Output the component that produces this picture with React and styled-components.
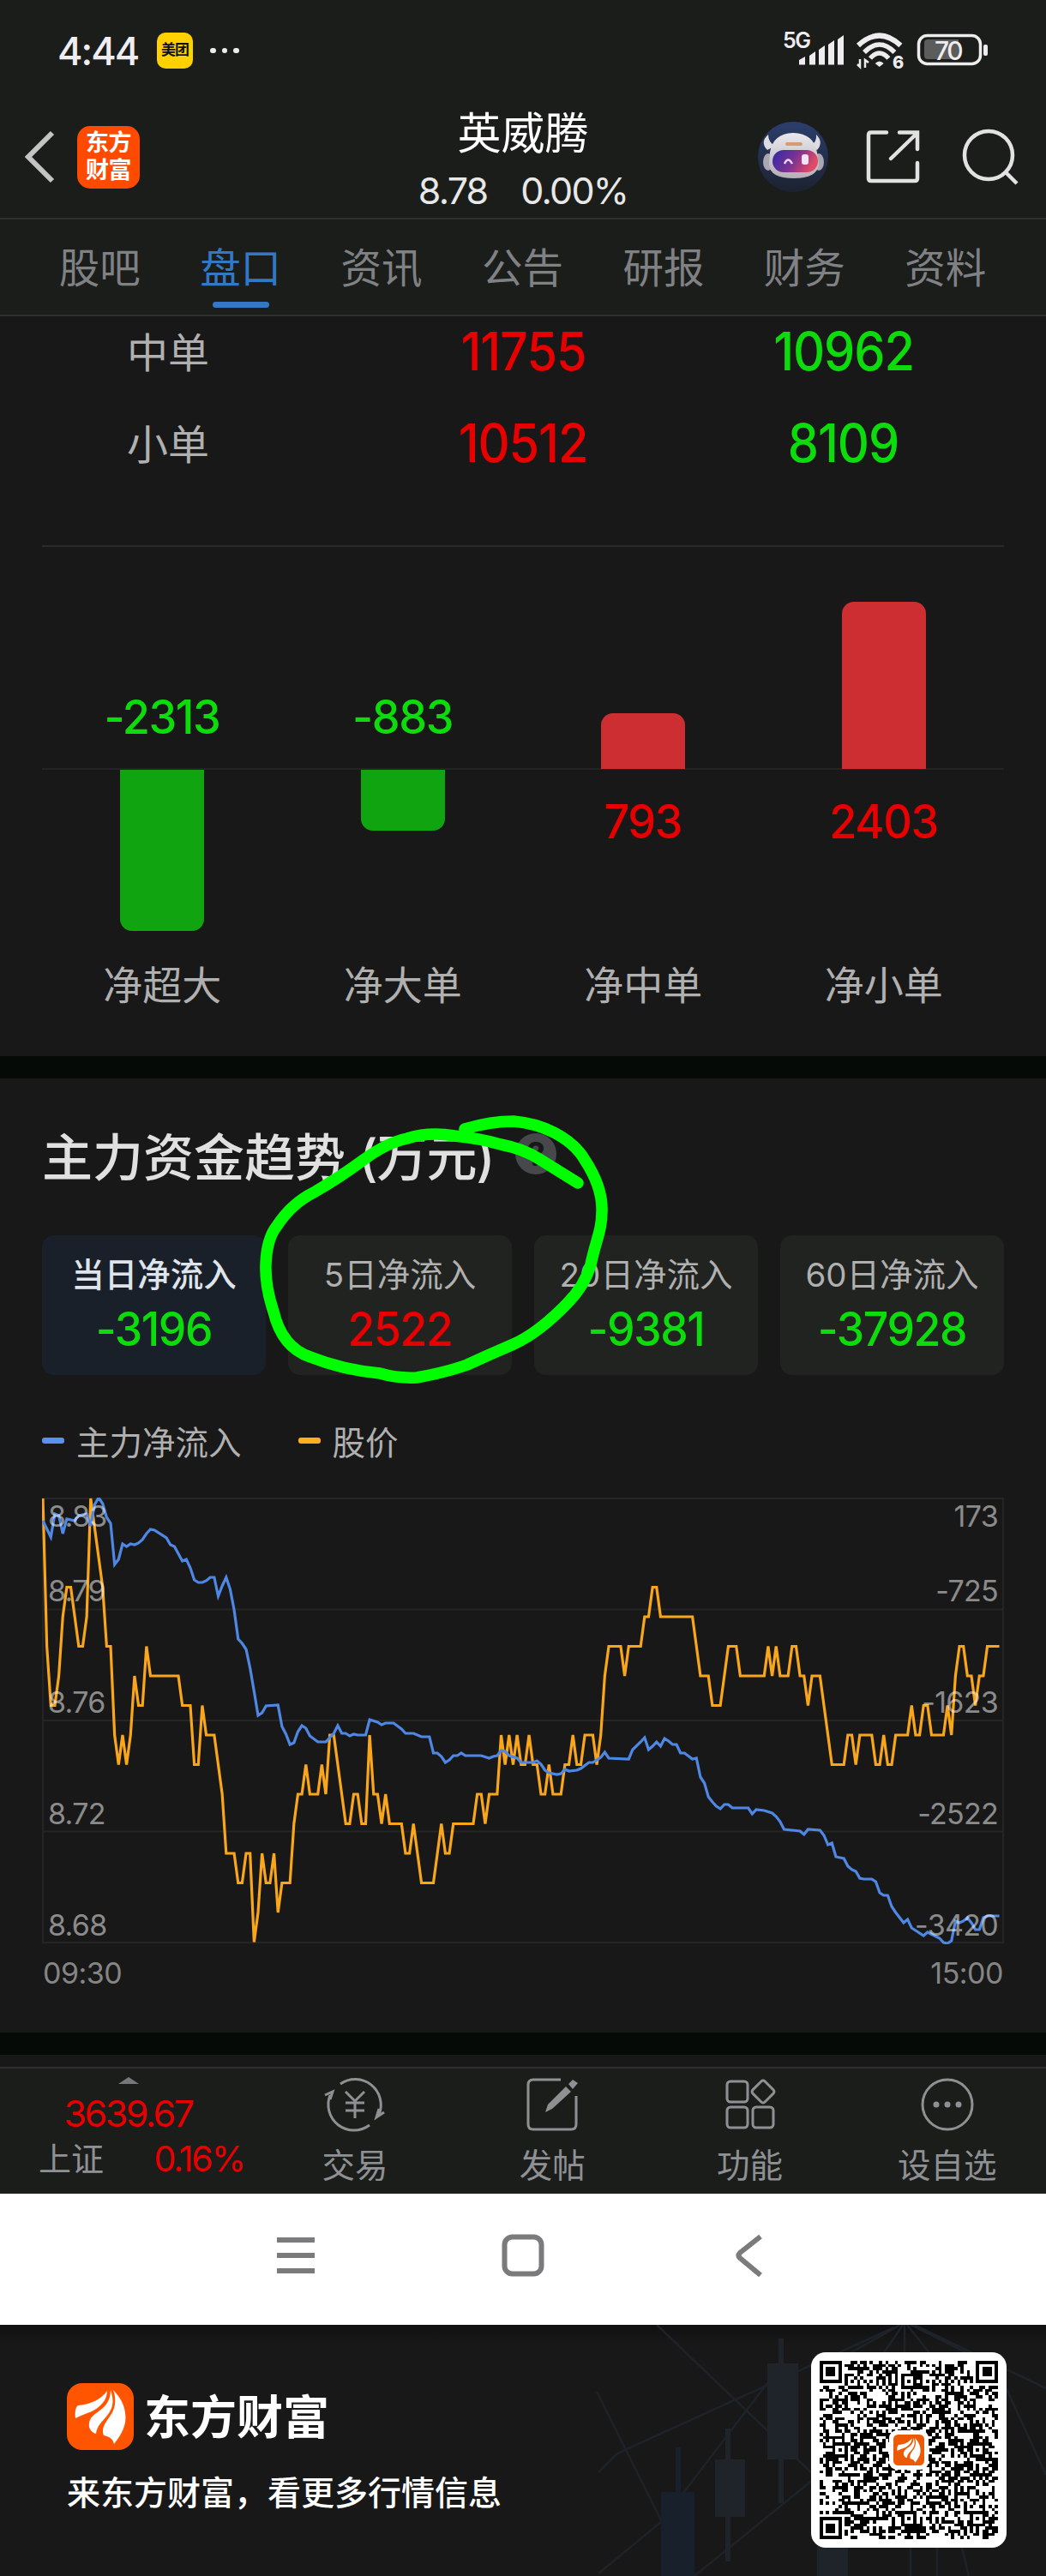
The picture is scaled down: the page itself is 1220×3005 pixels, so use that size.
import React from 'react'
import styled, { createGlobalStyle } from 'styled-components'

const RED = '#e60000'
const GREEN = '#0cdb0c'

const TABS = ['股吧', '盘口', '资讯', '公告', '研报', '财务', '资料']

const ORDERS = [
    { name: '中单', buy: '11755', sell: '10962' },
    { name: '小单', buy: '10512', sell: '8109' },
]

const NET = [
    { name: '净超大', value: -2313, size: 188 },
    { name: '净大单', value: -883, size: 71 },
    { name: '净中单', value: 793, size: 65 },
    { name: '净小单', value: 2403, size: 195 },
]

const PERIODS = [
    { name: '当日净流入', value: -3196, active: true },
    { name: '5日净流入', value: 2522 },
    { name: '20日净流入', value: -9381 },
    { name: '60日净流入', value: -37928 },
]

const PRICE_TICKS = ['8.83', '8.79', '8.76', '8.72', '8.68']
const FLOW_TICKS = ['173', '-725', '-1623', '-2522', '-3420']
const TICK_Y = [22, 109, 239, 369, 499]

// [minute, cents above 8.00], straight between the points
const PRICE = [
    [0, 83], [1, 78], [2, 76], [3, 76], [4, 77], [5, 79], [6, 80], [7, 80], [9, 78], [10, 78], [11, 79], [12, 83],
    [13, 82], [15, 80], [16, 78], [17, 78], [18, 75], [19, 74], [20, 75], [21, 74], [22, 75], [23, 77], [24, 76],
    [25, 76], [26, 78], [27, 77], [34, 77], [35, 76], [37, 76], [38, 74], [39, 74], [40, 76], [41, 75], [43, 75],
    [45, 73], [46, 71], [48, 71], [49, 70], [50, 70], [51, 71], [52, 71], [53, 68], [54, 69], [55, 71], [56, 70],
    [57, 70], [58, 71], [59, 69], [60, 70], [62, 70], [63, 72], [64, 73], [65, 73], [66, 74], [67, 73], [69, 73],
    [70, 74], [71, 73], [72, 75], [73, 75], [76, 72], [77, 72], [78, 73], [79, 73], [80, 72], [81, 72], [82, 75],
    [83, 73], [84, 73], [85, 72], [86, 73], [87, 72], [90, 72], [91, 71], [92, 71], [93, 72], [95, 70], [98, 70],
    [100, 72], [101, 71], [102, 71], [103, 72], [108, 72], [109, 73], [110, 73], [111, 72], [112, 73], [114, 73],
    [115, 75], [116, 74], [117, 75], [118, 74], [119, 75], [120, 74], [121, 74], [122, 75], [123, 74], [124, 74],
    [125, 73], [126, 73], [127, 74], [128, 73], [130, 73], [131, 74], [132, 74], [133, 75], [134, 74], [135, 74],
    [136, 75], [138, 75], [139, 74], [140, 75], [141, 77], [142, 78], [145, 78], [146, 77], [147, 78], [150, 78],
    [151, 79], [152, 79], [153, 80], [154, 80], [155, 79], [163, 79], [165, 77], [167, 77], [168, 76], [170, 76],
    [172, 78], [174, 78], [175, 77], [181, 77], [182, 78], [183, 77], [184, 78], [185, 77], [187, 77], [188, 78],
    [189, 78], [190, 77], [191, 77], [192, 76], [193, 77], [195, 77], [198, 74], [201, 74], [202, 75], [203, 75],
    [204, 74], [205, 75], [208, 75], [209, 74], [210, 74], [211, 75], [212, 74], [213, 74], [214, 75], [217, 75],
    [218, 76], [219, 75], [220, 75], [221, 76], [222, 76], [223, 75], [226, 75], [227, 76], [228, 75], [229, 77],
    [230, 78], [231, 78], [232, 77], [233, 77], [234, 76], [235, 77], [236, 77], [237, 78], [240, 78],
]

// [minute, distance below the top grid line]
const FLOW = [
    [0, 26], [2, 45], [3, 18], [4, 20], [5, 41], [6, 24], [8, 26], [9, 20], [11, 18], [12, 32], [13, 7], [14, -1],
    [15, 6], [16, 22], [17, 29], [18, 77], [19, 71], [20, 53], [21, 56], [22, 53], [23, 54], [24, 52], [25, 48],
    [26, 41], [27, 36], [28, 37], [31, 46], [32, 54], [33, 56], [35, 73], [36, 71], [37, 81], [38, 95], [39, 98],
    [40, 98], [41, 96], [42, 92], [43, 92], [44, 114], [45, 102], [46, 92], [47, 106], [48, 130], [49, 164],
    [50, 169], [51, 176], [52, 198], [53, 225], [54, 253], [55, 250], [56, 242], [59, 241], [60, 266], [61, 275],
    [62, 287], [63, 285], [64, 272], [65, 265], [66, 268], [67, 277], [69, 284], [71, 284], [73, 274], [74, 265],
    [75, 274], [76, 274], [77, 277], [78, 275], [79, 276], [81, 276], [82, 258], [84, 261], [85, 264], [86, 262],
    [88, 262], [90, 269], [91, 274], [93, 274], [95, 278], [97, 278], [98, 297], [99, 297], [100, 301], [101, 308],
    [102, 305], [103, 300], [104, 300], [105, 297], [106, 300], [110, 300], [112, 303], [113, 301], [114, 300],
    [115, 294], [116, 295], [117, 300], [119, 303], [120, 308], [123, 308], [124, 306], [125, 310], [126, 317],
    [127, 320], [129, 322], [130, 321], [131, 316], [132, 318], [134, 317], [135, 315], [137, 308], [138, 308],
    [140, 302], [141, 296], [142, 303], [147, 304], [148, 293], [150, 284], [151, 279], [152, 293], [153, 289],
    [154, 284], [155, 289], [156, 280], [157, 283], [158, 287], [159, 287], [160, 297], [161, 297], [163, 304],
    [164, 303], [165, 325], [166, 332], [167, 348], [168, 354], [169, 359], [170, 362], [171, 357], [172, 357],
    [173, 361], [177, 361], [178, 368], [179, 363], [181, 364], [183, 367], [184, 371], [185, 377], [186, 386],
    [190, 388], [191, 392], [192, 386], [195, 387], [196, 393], [197, 404], [198, 402], [199, 418], [201, 420],
    [202, 429], [203, 433], [204, 435], [205, 443], [206, 444], [208, 444], [209, 447], [210, 460], [211, 463],
    [212, 463], [213, 476], [214, 483], [216, 495], [217, 491], [218, 501], [221, 510], [222, 506], [225, 513],
    [226, 518], [227, 519], [228, 516], [229, 493], [230, 495], [231, 493], [232, 489], [233, 495], [234, 503],
    [235, 503], [236, 489], [237, 487], [240, 487],
]

const minuteX = (m) => 1 + m * 4.648
const pricePoints = PRICE.map(([m, c]) => `${minuteX(m)},${1 + (83 - c) * 34.5}`).join(' ')
const flowPoints = FLOW.map(([m, y]) => `${minuteX(m)},${y + 1}`).join(' ')

const QR_SIZE = 57

// finder and alignment squares are fixed, the rest is a seeded fill
function buildQr() {
    let seed = 20771
    const ring = (x, y, cx, cy) => Math.max(Math.abs(x - cx), Math.abs(y - cy))
    const finders = [[3, 3], [53, 3], [3, 53]]
    const aligns = [[28, 6], [6, 28], [50, 28], [28, 50], [50, 50]]
    let d = ''
    for (let y = 0; y < QR_SIZE; y++) {
        for (let x = 0; x < QR_SIZE; x++) {
            seed = (seed * 1103515245 + 12345) % 2147483648
            let on = (seed >> 16) % 100 < 50
            if (x === 6 || y === 6) on = (x + y) % 2 === 0
            aligns.forEach(([cx, cy]) => {
                const r = ring(x, y, cx, cy)
                if (r <= 2) on = r !== 1
            })
            finders.forEach(([cx, cy]) => {
                const r = ring(x, y, cx, cy)
                if (r <= 4) on = r !== 2 && r !== 4
            })
            if (on) d += `M${x} ${y}h1v1h-1z`
        }
    }
    return d
}
const QR_PATH = buildQr()

function Feather({ size, radius, color }) {
    return (
        <svg width={size} height={size} viewBox="0 0 78 78">
            <rect width="78" height="78" rx={radius} fill={color} />
            <path d="M10 41C9 34 10 28 13 26C27 25 40 19 47 9C47 20 39 28 29 33C22 36 15 38 10 41Z" fill="#fff" />
            <path d="M26 51C25 43 29 38 37 33C46 27 51 19 51 8C56 22 53 31 46 39C41 45 35 50 34 59C30 58 27 55 26 51Z" fill="#fff" />
            <path d="M43 61C40 54 44 47 50 39C57 30 58 19 54 8C65 19 70 32 68 46C66 56 61 63 55 71C54 65 49 62 43 61Z" fill="#fff" />
        </svg>
    )
}

function StatusIcons() {
    return (
        <svg width="242" height="68" viewBox="912 26 242 68">
            <g fill="#efecef">
                <path d="M932 71l7-4v9.500h-7zM944 66l7-5v15.500h-7zM955 59l7-5v22.500h-7zM966 53l7-5v28.500h-7zM977 47l7-5v34.500h-7z" />
                <path d="M1025.700 79l-5-4q5-5 10 0z" />
                <path d="M1003 70v9l-3-3M1009 80v-9l4 3" stroke="#efecef" strokeWidth="2.500" fill="none" />
                <rect x="1147" y="53" width="5" height="13" rx="2" />
            </g>
            <g fill="none" stroke="#efecef" strokeWidth="6">
                <path d="M1001 54q24.700-23 49.400 0" />
                <path d="M1008 62q17.700-18 35.400 0" strokeWidth="5.500" />
                <path d="M1015 69q10.700-12 21.400 0" strokeWidth="5.500" />
            </g>
            <rect x="1071.500" y="42.500" width="72" height="33" rx="10" fill="none" stroke="#efecef" strokeWidth="3.500" />
            <path d="M1082 47h36v23h-36q-4 0-4-4v-15q0-4 4-4z" fill="#5c5c5c" />
            <text x="913" y="56.500" fontSize="25" fontWeight="600" letterSpacing="-1.500" fill="#efecef">5G</text>
            <text x="1041" y="80.500" fontSize="20" fontWeight="800" fill="#efecef">6</text>
            <text x="1090" y="70.500" fontSize="30" fontWeight="500" letterSpacing="-2.500" fill="#efecef">70</text>
        </svg>
    )
}

function Robot() {
    return (
        <svg width="82" height="82" viewBox="0 0 82 82">
            <defs>
                <linearGradient id="sky" x1="0" y1="0" x2="0" y2="1">
                    <stop offset="0" stopColor="#2b3e6b" />
                    <stop offset="1" stopColor="#1c2230" />
                </linearGradient>
                <linearGradient id="visor" x1="0" y1="0" x2="1" y2="0.300">
                    <stop offset="0" stopColor="#2f2aa8" />
                    <stop offset="0.550" stopColor="#7b3292" />
                    <stop offset="1" stopColor="#e04a66" />
                </linearGradient>
                <linearGradient id="shell" x1="0" y1="0" x2="0" y2="1">
                    <stop offset="0" stopColor="#e9e7ec" />
                    <stop offset="1" stopColor="#b5afb8" />
                </linearGradient>
            </defs>
            <circle cx="41" cy="41" r="41" fill="url(#sky)" />
            <path d="M12 15Q2 24 11 33L20 28Q12 24 12 15ZM68 15Q77 24 69 33L61 28Q69 24 68 15Z" fill="#dddce2" />
            <ellipse cx="12" cy="47" rx="6" ry="10" fill="#aaa6b2" />
            <ellipse cx="71" cy="47" rx="6" ry="10" fill="#aaa6b2" />
            <path d="M14 36Q17 14 41 13Q66 14 69 36L71 50Q69 66 42 66Q14 66 13 50Z" fill="url(#shell)" />
            <rect x="17" y="33" width="53" height="26" rx="13" fill="url(#visor)" />
            <path d="M31 49q4-9 9 0" fill="none" stroke="#e6d9f5" strokeWidth="2.500" />
            <rect x="51" y="38" width="8" height="12" rx="3" fill="#f1e6f5" />
            <rect x="32" y="24" width="20" height="4" rx="2" fill="#d99a70" />
        </svg>
    )
}

function TradeIcon() {
    return (
        <svg width="72" height="66" viewBox="0 0 72 66" fill="none" stroke="#8f9094" strokeWidth="3">
            <path d="M19 9A30 30 0 0 1 64 45M53 57A30 30 0 0 1 7 22" />
            <path d="M1 22L10 18L7 27M70 42L61 48L64 38" />
            <path d="M25 18l11 11l11-11M36 29v20M25 31h22M25 40h22" />
        </svg>
    )
}

function PostIcon() {
    return (
        <svg width="72" height="66" viewBox="0 0 72 66" fill="none" stroke="#8f9094" strokeWidth="3">
            <path d="M46 4H14q-6 0-6 6v46q0 6 6 6h44q6 0 6-6V23" />
            <path d="M28 42l3-9L52 12l6 6L36 38zM55 9l5-5l6 4l-6 7z" fill="#8f9094" stroke="none" />
        </svg>
    )
}

function GridIcon() {
    return (
        <svg width="72" height="66" viewBox="0 0 72 66" fill="none" stroke="#8f9094" strokeWidth="3">
            <rect x="9" y="6" width="24" height="24" rx="4" />
            <rect x="9" y="36" width="24" height="24" rx="4" />
            <rect x="39" y="36" width="24" height="24" rx="4" />
            <rect x="41" y="8" width="20" height="20" rx="3" transform="rotate(45 51 18)" />
        </svg>
    )
}

function MoreIcon() {
    return (
        <svg width="72" height="66" viewBox="0 0 72 66" fill="none" stroke="#8f9094" strokeWidth="3">
            <circle cx="36" cy="33" r="29" />
            <g fill="#8f9094" stroke="none">
                <circle cx="23" cy="33" r="3.500" />
                <circle cx="36" cy="33" r="3.500" />
                <circle cx="49" cy="33" r="3.500" />
            </g>
        </svg>
    )
}

const ACTIONS = [
    { name: '交易', Icon: TradeIcon },
    { name: '发帖', Icon: PostIcon },
    { name: '功能', Icon: GridIcon },
    { name: '设自选', Icon: MoreIcon },
]

export default function App() {
    return (
        <Page>
            <GlobalStyle />
            <StatusBar>
                <Clock>4:44</Clock>
                <Badge>美团</Badge>
                <Dots><i /><i /><i /></Dots>
                <StatusIcons />
            </StatusBar>
            <Header>
                <Side>
                    <svg width="38" height="64" viewBox="0 0 38 64" fill="none" stroke="#c4c4c4" strokeWidth="6">
                        <path d="M34 4L6 32L34 60" />
                    </svg>
                    <AppLogo>东方<br />财富</AppLogo>
                </Side>
                <Stock>
                    <h1>英威腾</h1>
                    <p><span>8.78</span><span>0.00%</span></p>
                </Stock>
                <Side $right>
                    <Robot />
                    <svg width="64" height="64" viewBox="0 0 64 64" fill="none" stroke="#e2e2e2" strokeWidth="4.500" strokeLinecap="round">
                        <path d="M24 3.500H6q-3 0-3 3V57q0 3 3 3H57q3 0 3-3V39" />
                        <path d="M39 3.500H60V23M59 5L29 34" />
                    </svg>
                    <svg width="66" height="66" viewBox="0 0 66 66" fill="none" stroke="#e2e2e2" strokeWidth="4.500">
                        <circle cx="31" cy="31" r="28" />
                        <path d="M50.500 50.500L64 64" />
                    </svg>
                </Side>
            </Header>
            <Tabs>
                {TABS.map((t) => <Tab key={t} $active={t === '盘口'}>{t}</Tab>)}
            </Tabs>

            <Orders>
                {ORDERS.map((o) => (
                    <OrderRow key={o.name}>
                        <span>{o.name}</span>
                        <Amount $up>{o.buy}</Amount>
                        <Amount>{o.sell}</Amount>
                    </OrderRow>
                ))}
            </Orders>
            <NetChart>
                {NET.map((n) => (
                    <NetColumn key={n.name}>
                        <Half $top>
                            {n.value > 0 ? <Bar $up style={{ height: n.size }} /> : <NetValue>{n.value}</NetValue>}
                        </Half>
                        <Half>
                            {n.value > 0 ? <NetValue $up>{n.value}</NetValue> : <Bar style={{ height: n.size }} />}
                        </Half>
                        <NetName>{n.name}</NetName>
                    </NetColumn>
                ))}
            </NetChart>
            <Band />

            <Trend>
                <Title>
                    主力资金趋势 <b>(万元)</b>
                    <Help>?</Help>
                </Title>
                <Cards>
                    {PERIODS.map((p) => (
                        <Card key={p.name} $active={p.active}>
                            <h3>{p.name}</h3>
                            <CardValue $up={p.value > 0}>{p.value}</CardValue>
                        </Card>
                    ))}
                </Cards>
                <Legend>
                    <Key $color="#5a90ee">主力净流入</Key>
                    <Key $color="#ffae1f">股价</Key>
                </Legend>
                <Plot>
                    <svg width="1122" height="521" viewBox="0 0 1122 521" fill="none">
                        <path d="M1 1H1121V519H1ZM1 130.500H1121M1 260H1121M1 389.500H1121" stroke="#252525" strokeWidth="2" />
                        <polyline points={pricePoints} stroke="#faa61a" strokeWidth="3.200" />
                        <polyline points={flowPoints} stroke="#4f87e4" strokeWidth="3.200" />
                    </svg>
                    {PRICE_TICKS.map((t, i) => <Tick key={t} style={{ top: TICK_Y[i] }}>{t}</Tick>)}
                    {FLOW_TICKS.map((t, i) => <Tick key={t} $right style={{ top: TICK_Y[i] }}>{t}</Tick>)}
                </Plot>
                <Times><span>09:30</span><span>15:00</span></Times>
                <Marker width="440" height="340" viewBox="290 1290 440 340">
                    <path
                        d="M542 1317Q572 1308 599 1308Q624 1310 646 1321Q671 1334 682 1353Q703 1385 702 1413C702 1435 695 1447 689 1475Q682 1500 661 1521Q628 1555 599 1568Q571 1580 545 1592Q520 1601 486 1607Q463 1608 443 1602Q400 1598 362 1583Q329 1572 319 1530Q309 1500 310 1475Q311 1445 323 1430Q340 1404 366 1391Q397 1373 424 1353Q451 1333 475 1328Q500 1320 530 1325Q560 1328 584 1335Q610 1340 629 1352L674 1380"
                        fill="none" stroke="#00ff00" strokeWidth="13.500" strokeLinecap="round" strokeLinejoin="round"
                    />
                </Marker>
            </Trend>
            <Band />

            <Toolbar>
                <IndexBox>
                    <i />
                    <strong>3639.67</strong>
                    <p>上证<span>0.16%</span></p>
                </IndexBox>
                {ACTIONS.map(({ name, Icon }) => (
                    <Action key={name}><Icon />{name}</Action>
                ))}
            </Toolbar>
            <SystemNav>
                <svg width="50" height="50" viewBox="0 0 50 50" stroke="#7b7b7d" strokeWidth="6">
                    <path d="M3 7H47M3 25H47M3 43H47" />
                </svg>
                <svg width="50" height="50" viewBox="0 0 50 50" fill="none" stroke="#7b7b7d" strokeWidth="6">
                    <rect x="3.500" y="3.500" width="43" height="43" rx="9" />
                </svg>
                <svg width="50" height="50" viewBox="0 0 50 50" fill="none" stroke="#7b7b7d" strokeWidth="6">
                    <path d="M38 3L14 22Q11 25 14 28L38 48" />
                </svg>
            </SystemNav>
            <Footer>
                <Backdrop width="560" height="293" viewBox="660 0 560 293">
                    <g stroke="#1e2329" strokeWidth="2.500" fill="none">
                        <path d="M1043 3L720 150L698 172M766 0L949 175M696 78L772 230M698 290L771 230L895 68M810 293L949 180" />
                        <path d="M1050 0L990 34M1053 0L1030 34M1055 0V34M1058 0L1085 34M1062 0L1130 34M1066 0L1220 74M1174 75L1220 175M1062 260V293M1093 260V293M1122 260L1130 293" />
                    </g>
                    <g fill="#1f242a">
                        <path d="M908 16h6v192h-6zM895 45h36v112h-36zM846 121h6v155h-6zM834 157h35v67h-35zM953 255h36v38h-36z" />
                        <path d="M788 143h6v60h-6zM771 195h39v98h-39z" fill="#18202b" />
                    </g>
                </Backdrop>
                <Brand>
                    <div>
                        <Feather size={78} radius={18} color="#ff5500" />
                        <strong>东方财富</strong>
                    </div>
                    <p>来东方财富，看更多行情信息</p>
                </Brand>
                <QrCard>
                    <svg width="208" height="208" viewBox={`0 0 ${QR_SIZE} ${QR_SIZE}`} shapeRendering="crispEdges">
                        <path d={QR_PATH} fill="#000" />
                    </svg>
                    <QrLogo><Feather size={36} radius={12} color="#ec5a05" /></QrLogo>
                </QrCard>
            </Footer>
        </Page>
    )
}

const GlobalStyle = createGlobalStyle`
    * {
        box-sizing: border-box;
        margin: 0;
        padding: 0;
    }
    body {
        background: #181818;
        font-family: Inter, "Noto Sans CJK SC", sans-serif;
    }
    svg {
        display: block;
        flex-shrink: 0;
    }
`
const Page = styled.div`
    width: 1220px;
    height: 3005px;
    overflow: hidden;
    background: #181818;
`
const StatusBar = styled.div`
    height: 118px;
    padding: 0 66px 0 67px;
    display: flex;
    align-items: center;
    background: #1b1d1a;
`
const Clock = styled.span`
    width: 116px;
    font-size: 45px;
    font-weight: 500;
    letter-spacing: -2px;
    color: #f0edf0;
    white-space: nowrap;
`
const Badge = styled.span`
    width: 42px;
    height: 42px;
    border-radius: 10px;
    background: #ffd100;
    color: #111;
    font-size: 17px;
    font-weight: 700;
    line-height: 41px;
    text-align: center;
    letter-spacing: -1px;
`
const Dots = styled.span`
    display: flex;
    gap: 7px;
    margin: 0 auto 0 20px;
    i {
        width: 6.5px;
        height: 6.5px;
        border-radius: 50%;
        background: #efecef;
    }
`
const Header = styled.div`
    height: 138px;
    padding: 0 32px 0 27px;
    display: grid;
    grid-template-columns: 330px 1fr 330px;
    grid-template-rows: 130px;
    align-items: center;
    background: #1b1d1a;
    border-bottom: 2px solid #2e302e;
`
const Side = styled.div`
    display: flex;
    align-items: center;
    gap: ${(p) => (p.$right ? '44px' : '25px')};
    justify-content: ${(p) => (p.$right ? 'flex-end' : 'flex-start')};
    svg + svg + svg {
        margin-left: 4px;
    }
`
const AppLogo = styled.div`
    width: 73px;
    height: 73px;
    padding-top: 4px;
    border-radius: 15px;
    background: #ff4a00;
    color: #fff;
    font-size: 27px;
    font-weight: 700;
    line-height: 32px;
    text-align: center;
    letter-spacing: -0.5px;
`
const Stock = styled.div`
    align-self: start;
    padding: 5px 0 0 5px;
    text-align: center;
    color: #fff;
    h1 {
        height: 66px;
        font-size: 51px;
        line-height: 66px;
        font-weight: 400;
    }
    p {
        display: flex;
        justify-content: center;
        gap: 39px;
        font-size: 43px;
        line-height: 66px;
        letter-spacing: -1.8px;
        color: #e8e8e8;
    }
`
const Tabs = styled.div`
    height: 113px;
    padding: 0 35px 0 34px;
    display: grid;
    grid-template-columns: repeat(7, 1fr);
    background: #1b1d1a;
    border-bottom: 2px solid #2e302e;
`
const Tab = styled.div`
    display: flex;
    flex-direction: column;
    align-items: center;
    font-size: 47.5px;
    line-height: 48px;
    padding-top: 33px;
    color: ${(p) => (p.$active ? '#3378c4' : '#808184')};
    &::after {
        content: '';
        width: 66px;
        height: 7px;
        margin-top: 15px;
        border-radius: 4px;
        background: ${(p) => (p.$active ? '#3378c4' : 'transparent')};
    }
`
const Orders = styled.div`
    height: 269px;
    margin: 0 49px;
    border-bottom: 2px solid #2a2a2a;
`
const OrderRow = styled.div`
    height: 107px;
    display: grid;
    grid-template-columns: 294px 534px 214px;
    justify-items: center;
    line-height: 86px;
    color: #b0b0b0;
    font-size: 48px;
`
const Amount = styled.span`
    font-size: 62px;
    line-height: 81px;
    font-weight: 500;
    letter-spacing: -1.2px;
    transform: scaleX(0.93);
    color: ${(p) => (p.$up ? RED : GREEN)};
`
const NetChart = styled.div`
    height: 594px;
    margin: 0 49px;
    padding-top: 60px;
    display: grid;
    grid-template-columns: repeat(4, 1fr);
`
const NetColumn = styled.div`
    display: flex;
    flex-direction: column;
    align-items: center;
`
const Half = styled.div`
    width: 100%;
    height: ${(p) => (p.$top ? '200px' : '216px')};
    display: flex;
    flex-direction: column;
    align-items: center;
    justify-content: ${(p) => (p.$top ? 'flex-end' : 'flex-start')};
    border-bottom: ${(p) => (p.$top ? '2px solid #242424' : '0')};
`
const Bar = styled.div`
    width: 98px;
    margin-bottom: ${(p) => (p.$up ? '-1px' : '0')};
    border-radius: ${(p) => (p.$up ? '14px 14px 0 0' : '0 0 14px 14px')};
    background: ${(p) => (p.$up ? '#cd2e31' : '#10a510')};
`
const NetValue = styled.span`
    font-size: 55px;
    line-height: 120px;
    font-weight: 500;
    letter-spacing: -1.5px;
    transform: scaleX(0.95);
    color: ${(p) => (p.$up ? RED : GREEN)};
`
const NetName = styled.span`
    font-size: 46px;
    line-height: 70px;
    color: #b0b0b0;
`
const Band = styled.div`
    height: 26px;
    background: #050a06;
`
const Trend = styled.section`
    height: 1113px;
    padding: 0 49px;
    position: relative;
`
const Title = styled.h2`
    height: 183px;
    padding-bottom: 7px;
    display: flex;
    align-items: center;
    font-size: 59px;
    font-weight: 500;
    color: #e0e0e0;
    white-space: pre;
    b {
        font-weight: 500;
        letter-spacing: -1px;
    }
`
const Help = styled.span`
    width: 48px;
    height: 48px;
    margin-left: 25px;
    border-radius: 50%;
    background: #46484c;
    color: #181818;
    font-size: 38px;
    font-weight: 700;
    line-height: 48px;
    text-align: center;
`
const Cards = styled.div`
    display: grid;
    grid-template-columns: repeat(4, 1fr);
    gap: 26px;
`
const Card = styled.div`
    height: 163px;
    border-radius: 14px;
    text-align: center;
    background: ${(p) => (p.$active ? '#19202a' : '#212321')};
    h3 {
        height: 66px;
        padding-top: 18px;
        font-size: 38.5px;
        line-height: 56px;
        font-weight: ${(p) => (p.$active ? 500 : 400)};
        color: ${(p) => (p.$active ? '#dfe4ea' : '#b0b0b0')};
        white-space: nowrap;
    }
`
const CardValue = styled.p`
    font-size: 55px;
    line-height: 86px;
    font-weight: 500;
    letter-spacing: -1.5px;
    transform: scaleX(0.94);
    color: ${(p) => (p.$up ? RED : GREEN)};
`
const Legend = styled.div`
    height: 143px;
    padding-top: 47px;
    display: flex;
    gap: 66px;
`
const Key = styled.span`
    height: 58px;
    display: flex;
    align-items: center;
    font-size: 38.5px;
    color: #b0b0b0;
    &::before {
        content: '';
        width: 26px;
        height: 7px;
        margin-right: 14px;
        border-radius: 3px;
        background: ${(p) => p.$color};
    }
`
const Plot = styled.div`
    height: 519px;
    position: relative;
`
const Tick = styled.span`
    position: absolute;
    ${(p) => (p.$right ? 'right: 7px;' : 'left: 7px;')}
    transform: translateY(-50%);
    font-size: 34px;
    line-height: 40px;
    letter-spacing: -0.7px;
    color: rgba(255, 255, 255, 0.5);
`
const Times = styled.div`
    display: flex;
    justify-content: space-between;
    padding: 16px 1px;
    font-size: 34px;
    line-height: 40px;
    letter-spacing: -0.5px;
    color: #858585;
`
// hand-drawn circle lying over the title and the cards
const Marker = styled.svg`
    position: absolute;
    left: 290px;
    top: 32px;
`
const Toolbar = styled.div`
    height: 148px;
    margin-top: 14px;
    display: grid;
    grid-template-columns: 299px repeat(4, 1fr);
    background: #1b1d1a;
    border-top: 2px solid #2e302e;
`
const IndexBox = styled.div`
    display: flex;
    flex-direction: column;
    align-items: center;
    color: ${RED};
    i {
        margin: 10px 0 11px;
        border: 12px solid transparent;
        border-top: 0;
        border-bottom: 8px solid #77787c;
    }
    strong {
        font-size: 43px;
        line-height: 46px;
        font-weight: 400;
        letter-spacing: -2.5px;
    }
    p {
        width: 100%;
        display: flex;
        justify-content: space-between;
        padding: 0 14px 0 45px;
        font-size: 38px;
        line-height: 61px;
        color: #8f9094;
    }
    span {
        font-size: 41px;
        letter-spacing: -2px;
        color: ${RED};
    }
`
const Action = styled.div`
    display: flex;
    flex-direction: column;
    align-items: center;
    gap: 8px;
    padding-top: 9px;
    font-size: 38.5px;
    line-height: 60px;
    color: #8f9094;
`
const SystemNav = styled.div`
    height: 153px;
    padding: 0 321px 9px 320px;
    display: flex;
    align-items: center;
    justify-content: space-between;
    background: #fff;
`
const Footer = styled.footer`
    height: 293px;
    padding: 0 46px 0 78px;
    position: relative;
    display: flex;
    justify-content: space-between;
    background: linear-gradient(#101012, #181818 22px);
`
const Backdrop = styled.svg`
    position: absolute;
    right: 0;
    top: 0;
`
const Brand = styled.div`
    padding-top: 68px;
    color: #fff;
    div {
        display: flex;
        align-items: center;
        gap: 12px;
        height: 78px;
    }
    strong {
        padding-bottom: 5px;
        font-size: 54px;
        font-weight: 700;
    }
    p {
        font-size: 39px;
        font-weight: 500;
        line-height: 60px;
        margin-top: 20px;
    }
`
const QrCard = styled.div`
    width: 228px;
    height: 228px;
    margin-top: 32px;
    padding: 10px;
    border-radius: 17px;
    background: #fff;
    position: relative;
`
const QrLogo = styled.div`
    position: absolute;
    left: 91px;
    top: 91px;
    padding: 5px;
    border-radius: 9px;
    background: #fff;
`
